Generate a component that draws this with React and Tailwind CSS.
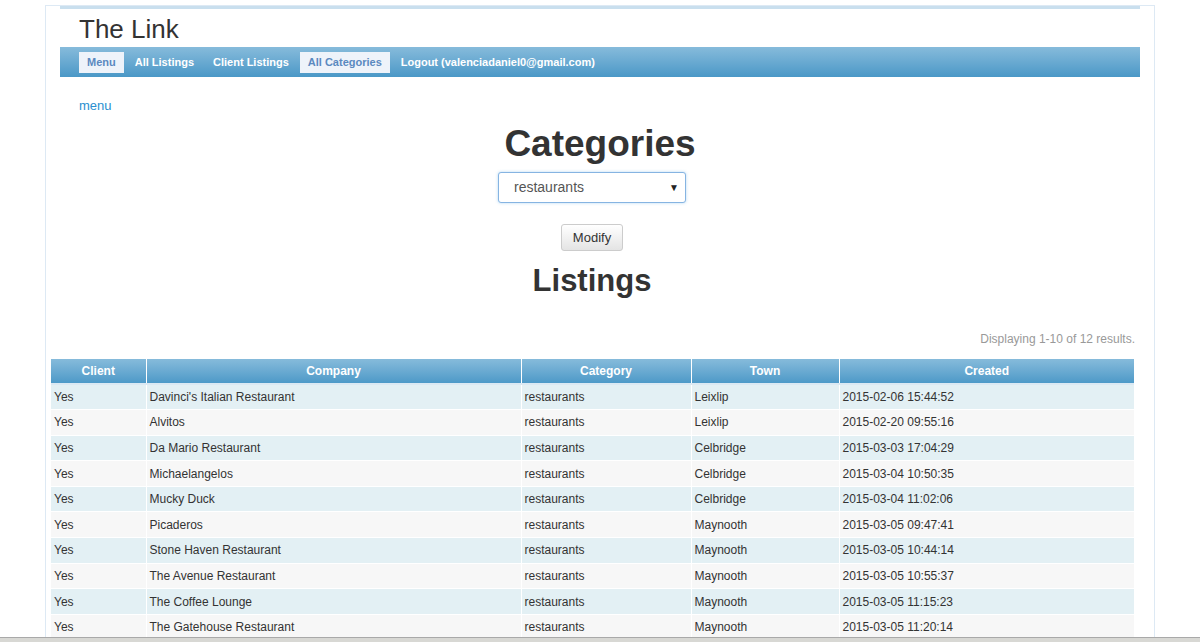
import React from 'react'

const rows = [
  ['Yes', "Davinci's Italian Restaurant", 'restaurants', 'Leixlip', '2015-02-06 15:44:52'],
  ['Yes', 'Alvitos', 'restaurants', 'Leixlip', '2015-02-20 09:55:16'],
  ['Yes', 'Da Mario Restaurant', 'restaurants', 'Celbridge', '2015-03-03 17:04:29'],
  ['Yes', 'Michaelangelos', 'restaurants', 'Celbridge', '2015-03-04 10:50:35'],
  ['Yes', 'Mucky Duck', 'restaurants', 'Celbridge', '2015-03-04 11:02:06'],
  ['Yes', 'Picaderos', 'restaurants', 'Maynooth', '2015-03-05 09:47:41'],
  ['Yes', 'Stone Haven Restaurant', 'restaurants', 'Maynooth', '2015-03-05 10:44:14'],
  ['Yes', 'The Avenue Restaurant', 'restaurants', 'Maynooth', '2015-03-05 10:55:37'],
  ['Yes', 'The Coffee Lounge', 'restaurants', 'Maynooth', '2015-03-05 11:15:23'],
  ['Yes', 'The Gatehouse Restaurant', 'restaurants', 'Maynooth', '2015-03-05 11:20:14'],
]

const navItems = [
  { label: 'Menu', active: true },
  { label: 'All Listings' },
  { label: 'Client Listings' },
  { label: 'All Categories', active: true },
  { label: 'Logout (valenciadaniel0@gmail.com)' },
]

const cols = [
  { title: 'Client', w: 'w-[95px]' },
  { title: 'Company', w: 'w-[375px]' },
  { title: 'Category', w: 'w-[170px]' },
  { title: 'Town', w: 'w-[148px]' },
  { title: 'Created', w: 'w-[295px]' },
]

export default function App() {
  return (
    <div className="h-[642px] overflow-hidden bg-white text-[#333] font-['Liberation_Sans',Arial,sans-serif]">
      <div className="h-[637px] overflow-hidden pt-[5px]">
        {/* page frame */}
        <div className="ml-[45px] w-[1110px] min-h-[700px] border border-[#dde9f4] border-b-0">
          {/* header */}
          <div className="mx-[14px]">
            <div className="h-[3px] bg-[#c9dfee]" />
            <div className="h-[38px] pl-[19px] pt-[5px] text-[26px] leading-[30px] text-[#333]">The Link</div>
            <nav className="h-[30px] flex items-center gap-[3px] pl-[19px] bg-gradient-to-b from-[#86bbdb] to-[#4a98c7]">
              {navItems.map(n => (
                <a
                  key={n.label}
                  className={`h-[21px] px-[8px] flex items-center text-[11px] font-bold ${n.active ? 'bg-[#eef3fa] text-[#5b89c0]' : 'text-white'}`}
                >
                  {n.label}
                </a>
              ))}
            </nav>
          </div>

          <div className="pl-[33px] mt-[21px] text-[13px] leading-[16px] text-[#2a8fd0]">menu</div>

          {/* categories form */}
          <div className="flex flex-col items-center">
            <h1 className="mt-[8px] text-[37px] leading-[44px] font-bold text-[#333]">Categories</h1>
            <div className="mt-[6px] mr-[16px] w-[188px] h-[31px] rounded-[3px] border border-[#86b4e2] shadow-[0_0_3px_rgba(102,175,233,0.5)] bg-white flex items-center justify-between pl-[15px] pr-[6px] text-[14px] text-[#555]">
              <span>restaurants</span>
              <span className="text-[10px] text-[#222]">▼</span>
            </div>
            <button className="mt-[21px] mr-[16px] w-[62px] h-[27px] rounded-[3px] border border-[#ccc] bg-gradient-to-b from-white to-[#e4e4e4] text-[13px] text-[#333]">
              Modify
            </button>
            <h2 className="mt-[13px] mr-[16px] text-[31px] leading-[34px] font-bold text-[#333]">Listings</h2>
          </div>

          <div className="mt-[33px] w-[1089px] text-right text-[12px] leading-[16px] text-[#999]">
            Displaying 1-10 of 12 results.
          </div>

          <table className="ml-[5px] mt-[12px] w-[1083px] border-collapse text-[12px] table-fixed">
            <thead>
              <tr className="h-[25px] bg-gradient-to-b from-[#86bbdb] to-[#4a98c7]">
                {cols.map((c, i) => (
                  <th
                    key={c.title}
                    className={`${c.w} text-white font-bold text-center border-b-2 border-[#dbe9f3] ${i < cols.length - 1 ? 'border-r border-r-white' : ''}`}
                  >
                    {c.title}
                  </th>
                ))}
              </tr>
            </thead>
            <tbody>
              {rows.map((r, ri) => (
                <tr key={ri} className={`h-[25.6px] ${ri % 2 === 0 ? 'bg-[#e3f0f4]' : 'bg-[#f7f7f7]'} border-b border-white`}>
                  {r.map((cell, ci) => (
                    <td
                      key={ci}
                      className={`pl-[3px] text-[#333] ${ci < r.length - 1 ? 'border-r border-white' : ''}`}
                    >
                      {cell}
                    </td>
                  ))}
                </tr>
              ))}
            </tbody>
          </table>
        </div>
      </div>
      <div className="h-[5px] border-t border-[#a9a9a9] bg-[#d8d8d4]" />
    </div>
  )
}
